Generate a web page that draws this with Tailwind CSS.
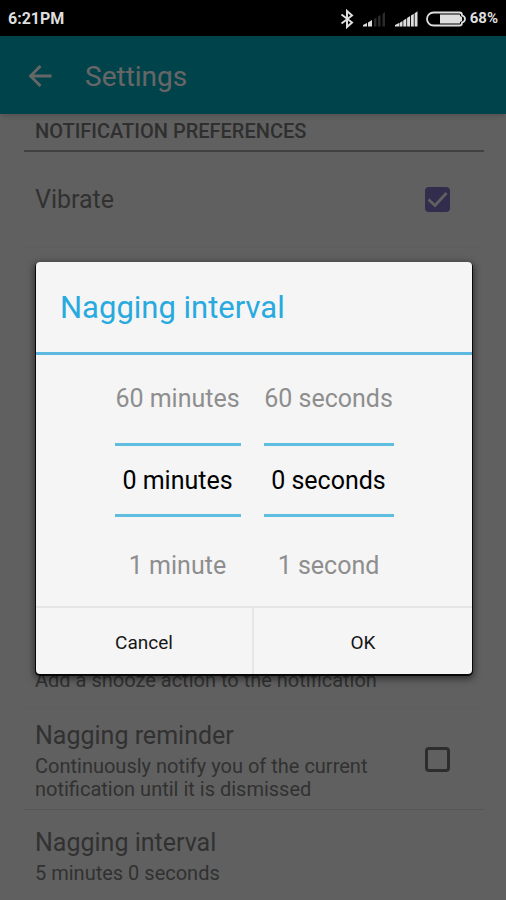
<!DOCTYPE html>
<html lang="en">
<head>
<meta charset="utf-8">
<meta name="viewport" content="width=device-width, initial-scale=1">
<title>Settings</title>
<script src="https://cdn.jsdelivr.net/npm/@tailwindcss/browser@4"></script>
</head>
<body class="flex h-screen flex-col overflow-hidden bg-black font-[Roboto,sans-serif]">

<!-- Status bar -->
<div class="flex h-9 shrink-0 items-center justify-between bg-black px-2 pt-px text-base font-bold text-[#dedede]">
  <span>6:21PM</span>
  <div class="flex items-center gap-2">
    <svg class="h-5 w-[14px]" viewBox="0 0 14 20" fill="none" stroke="#dedede" stroke-width="2" aria-hidden="true"><path d="M1.500 5.500 12 13.500 7 18V2l5 4.500L1.500 14.500"/></svg>
    <svg class="h-4 w-6" viewBox="0 0 24 16" aria-hidden="true"><path fill="#dedede" d="M1 15.500V14l4-2v3.500zM6 15.500v-4L10 9v6.500z"/><path fill="#2b2b2b" d="M12 8l2.500-1.500v9H12zM16 5.500l2.500-1.500v11.500H16zM20.500 3l2.500-2v14.500h-2.500z"/></svg>
    <svg class="h-4 w-6" viewBox="0 0 24 16" aria-hidden="true"><path fill="#dedede" d="M1 15.500V14l4-2v3.500zM5.500 15.500v-3.500L8.500 10v5.500zM9.300 15.500v-6l3-2v8zM13.100 15.500V7l3-2v10.500zM17 15.500V4.500l2.800-1.800v12.800zM20.600 2.200 23.500.300v15.200h-2.900z"/></svg>
    <div class="flex items-center gap-1">
      <svg class="h-4 w-10" viewBox="0 0 40 16" aria-hidden="true"><path fill="none" stroke="#dedede" stroke-width="1.800" d="M7.500 1.500h26c1.500 0 2.500 1 2.500 2.500v.500c2 .500 3 1.500 3 3.500s-1 3-3 3.500v.500c0 1.500-1 2.500-2.500 2.500h-26A6.500 6.500 0 0 1 7.500 1.500z"/><path fill="#dedede" d="M14 3.500h20v1.500l2 1v4l-2 1v1.500H14z"/></svg>
      <span class="text-[15px]">68%</span>
    </div>
  </div>
</div>

<div class="relative min-h-0 flex-1 bg-[#f0f0f0]">
  <div class="flex h-full flex-col overflow-hidden">
    <header class="z-0 flex h-[78px] shrink-0 items-center gap-[33px] bg-[#00a8bc] px-7 pt-1 text-white shadow-md">
      <button type="button" aria-label="Back">
        <svg class="h-6 w-6" viewBox="0 0 24 24" fill="none" stroke="#fff" stroke-width="2.800"><path d="M23.500 11H3M12.500 1 2.500 11l10 10"/></svg>
      </button>
      <h1 class="text-[28px] leading-8">Settings</h1>
    </header>

    <main class="flex flex-1 flex-col pr-[22px] pl-6">
      <h2 class="border-b-2 border-[#a0a0a0] px-[11px] pt-[7px] pb-[9px] text-[20px] leading-5 font-medium text-[#767676]">NOTIFICATION PREFERENCES</h2>

      <div class="flex h-24 items-center justify-between border-b border-[#ececec] pr-[34px] pl-[11px]">
        <label for="vibrate" class="text-[25px] leading-8 text-[#7c7c7c]">Vibrate</label>
        <span class="grid place-items-center">
          <input id="vibrate" type="checkbox" checked class="col-start-1 row-start-1 size-[25px] appearance-none rounded-sm border-3 border-[#707070] checked:border-0 checked:bg-[#7d6fc0]">
          <svg class="pointer-events-none col-start-1 row-start-1 size-[25px]" viewBox="0 0 25 25" fill="none" stroke="#f0f0f0" stroke-width="2.800" aria-hidden="true"><path d="M3.500 12.500 10 18.500 21.500 6"/></svg>
        </span>
      </div>

      <div class="flex flex-1 flex-col justify-end border-b border-[#ececec] px-[11px] pb-4">
        <p class="text-[20px] leading-[23px] text-[#7c7c7c]">Add a snooze action to the notification</p>
      </div>

      <div class="flex items-center justify-between border-b border-[#d8d8d8] py-2 pr-[34px] pl-[11px]">
        <div class="w-[350px]">
          <label for="nagging" class="block text-[25px] leading-[38px] text-[#7c7c7c]">Nagging reminder</label>
          <p id="nagging-info" class="text-[20px] leading-[23px] text-[#7c7c7c]">Continuously notify you of the current notification until it is dismissed</p>
        </div>
        <input id="nagging" type="checkbox" aria-describedby="nagging-info" class="size-[25px] appearance-none rounded-sm border-3 border-[#707070]">
      </div>

      <button type="button" class="px-[11px] pt-[14px] pb-[15px] text-left text-[#7c7c7c]">
        <span class="block text-[25px] leading-[38px]">Nagging interval</span>
        <span class="block text-[20px] leading-[23px]">5 minutes 0 seconds</span>
      </button>
    </main>
  </div>

  <!-- Scrim and dialog -->
  <div class="absolute inset-0 flex items-center justify-center bg-black/60 pr-[34px] pl-9">
    <section role="dialog" aria-modal="true" aria-labelledby="dialog-title" class="w-full rounded-sm bg-[#f5f5f5] shadow-[0_3px_7px_2px_rgba(0,0,0,0.5),0_1px_0_1px_rgba(0,0,0,0.85)]">
      <h2 id="dialog-title" class="border-b-3 border-[#5cb8de] px-6 pt-[26px] pb-6 text-[31px] leading-10 text-[#28aade]">Nagging interval</h2>

      <div class="flex justify-center gap-[23px] text-center text-[25px] text-[#8e8e8e]">
        <div class="flex w-[126px] flex-col">
          <button type="button" class="h-[88px] whitespace-nowrap">60 minutes</button>
          <input type="text" aria-label="Minutes" value="0 minutes" class="h-[74px] w-full border-y-3 border-[#5fbde0] text-center text-black">
          <button type="button" class="h-[89px] pt-2 whitespace-nowrap">1 minute</button>
        </div>
        <div class="flex w-[130px] flex-col">
          <button type="button" class="h-[88px] whitespace-nowrap">60 seconds</button>
          <input type="text" aria-label="Seconds" value="0 seconds" class="h-[74px] w-full border-y-3 border-[#5fbde0] text-center text-black">
          <button type="button" class="h-[89px] pt-2 whitespace-nowrap">1 second</button>
        </div>
      </div>

      <div class="grid grid-cols-2 divide-x-2 divide-[#e6e6e6] border-t-2 border-[#e6e6e6] text-[19px] text-[#161616]">
        <button type="button" class="h-[66px] pt-1">Cancel</button>
        <button type="button" class="h-[66px] pt-1">OK</button>
      </div>
    </section>
  </div>
</div>
</body>
</html>
